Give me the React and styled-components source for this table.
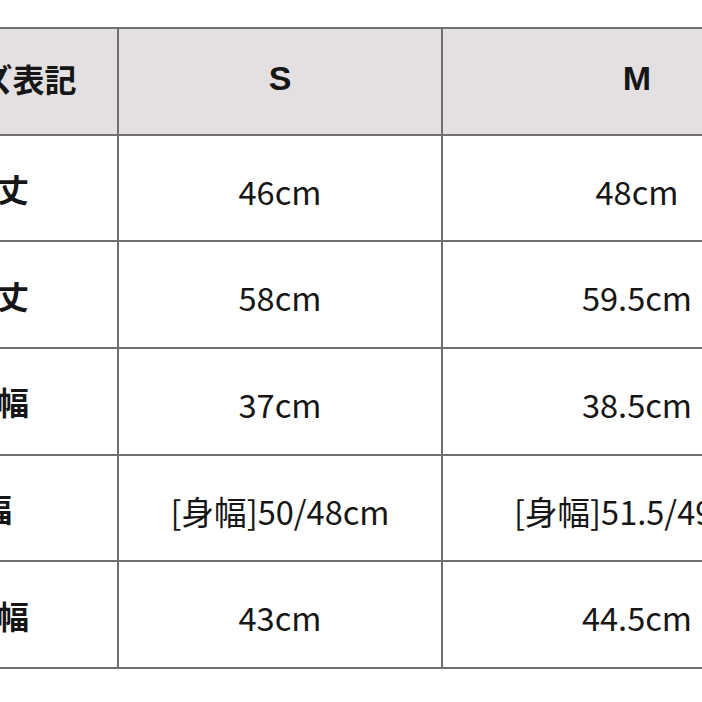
import React from "react";
import styled, { createGlobalStyle } from "styled-components";

const Global = createGlobalStyle`
  html, body {
    margin: 0;
    padding: 0;
    background: #ffffff;
    overflow: hidden;
  }
  body {
    font-family: "Noto Sans CJK JP", "Noto Sans", sans-serif;
  }
`;

const Page = styled.div`
  width: 702px;
  height: 702px;
  overflow: hidden;
  padding-top: 27px;
  box-sizing: border-box;
`;

const Table = styled.div`
  display: grid;
  grid-template-columns: 240px 322px 388px;
  grid-auto-rows: 104.67px;
  gap: 2px;
  padding: 2px;
  background: #6f6f6f;
  width: max-content;
  margin-left: -125px;
`;

const Cell = styled.div`
  display: flex;
  align-items: center;
  justify-content: center;
  box-sizing: border-box;
  background: #ffffff;
  color: #161616;
  white-space: nowrap;
  font-family: "Noto Sans CJK JP", "Noto Sans", sans-serif;
  font-size: 32.6px;
  font-weight: 400;
  line-height: 1;
  padding-top: 6px;
`;

const HeadCell = styled(Cell)`
  background: #e4e0e1;
  font-family: "Liberation Sans", "Noto Sans CJK JP", sans-serif;
  font-size: 34px;
  font-weight: 700;
  padding-top: 0;
  padding-bottom: 7px;
`;

const LabelCell = styled(Cell)`
  font-size: 32px;
  font-weight: 700;
  padding-top: 0;
  padding-right: ${(p) => p.$shift || 0}px;
`;

const HeadLabel = styled.span`
  font-family: "Noto Sans CJK JP", sans-serif;
  font-size: 32px;
  font-weight: 700;
`;

const rows = [
  { label: "着丈", s: "46cm", m: "48cm" },
  { label: "袖丈", s: "58cm", m: "59.5cm" },
  { label: "肩幅", s: "37cm", m: "38.5cm" },
  { label: "身幅", s: "[身幅]50/48cm", m: "[身幅]51.5/49cm", shift: 34 },
  { label: "裾幅", s: "43cm", m: "44.5cm" },
];

export default function App() {
  return (
    <Page>
      <Global />
      <Table>
        <HeadCell>
          <HeadLabel>サイズ表記</HeadLabel>
        </HeadCell>
        <HeadCell>S</HeadCell>
        <HeadCell>M</HeadCell>
        {rows.map((r) => (
          <React.Fragment key={r.label}>
            <LabelCell $shift={r.shift}>{r.label}</LabelCell>
            <Cell>{r.s}</Cell>
            <Cell>{r.m}</Cell>
          </React.Fragment>
        ))}
      </Table>
    </Page>
  );
}
